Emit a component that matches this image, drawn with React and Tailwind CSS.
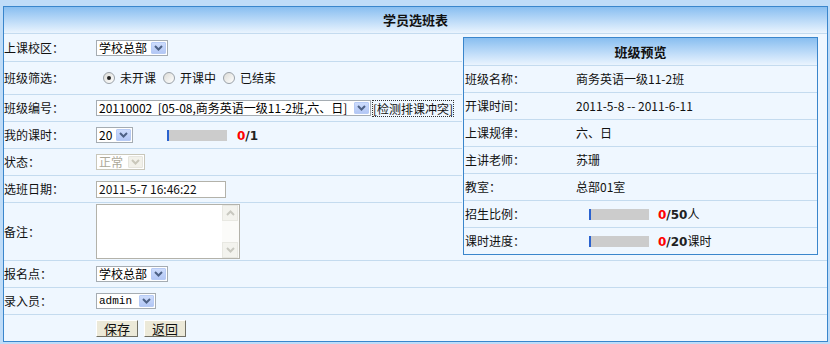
const LINE = 'border-[#c4dbef]';

function Chevron({ color = '#4d6185' }) {
  return (
    <svg width="9" height="6" viewBox="0 0 9 6">
      <path d="M1 1 L4.5 4.5 L8 1" fill="none" stroke={color} strokeWidth="2" />
    </svg>
  );
}

function Select({ text, className, disabled, mono }) {
  return (
    <div
      className={`flex h-[16px] items-stretch border bg-white ${
        disabled ? 'border-[#c9c7ba] text-[#aca899]' : 'border-[#a5acb2] text-black'
      } ${className}`}
    >
      <span
        className={`flex flex-1 items-center whitespace-pre pl-[2px] leading-[14px] ${
          mono ? "font-['Liberation_Mono',monospace] text-[11px]" : ''
        }`}
      >
        {text}
      </span>
      <span
        className={`m-[1px] flex w-[15px] shrink-0 items-center justify-center rounded-[1px] border ${
          disabled
            ? 'border-[#e6e5de] bg-[#f2f1ea]'
            : 'border-[#b7cbf5] bg-gradient-to-b from-[#cddcfc] to-[#b3c7f5]'
        }`}
      >
        <Chevron color={disabled ? '#c9c7ba' : '#4d6185'} />
      </span>
    </div>
  );
}

function Radio({ checked, label }) {
  return (
    <label className="flex items-center">
      <span className="flex h-[12px] w-[12px] items-center justify-center rounded-full border border-[#9aa1a8] bg-gradient-to-br from-[#dcdcd7] to-white">
        {checked && <span className="h-[4px] w-[4px] rounded-full bg-[#222]" />}
      </span>
      <span className="ml-[5px]">{label}</span>
    </label>
  );
}

function Bar() {
  return (
    <span className="flex h-[11px] w-[60px] bg-[#cccccc]">
      <span className="h-full w-[2px] bg-[#2a62cf]" />
    </span>
  );
}

function Ratio({ total }) {
  return (
    <span className="font-['DejaVu_Sans',sans-serif] text-[12px] font-bold">
      <span className="text-[#ff0000]">0</span>
      <span className="text-[#222]">/{total}</span>
    </span>
  );
}

function Row({ label, h, last, children }) {
  return (
    <div className={`flex items-center ${h} ${last ? '' : `border-b ${LINE}`}`}>
      <div className="w-[92px] shrink-0">{label}</div>
      <div className="flex flex-1 items-center">{children}</div>
    </div>
  );
}

function PreviewRow({ label, last, children }) {
  return (
    <div className={`flex items-center ${last ? 'h-[26px]' : `h-[27px] border-b ${LINE}`}`}>
      <div className="w-[112px] shrink-0 pl-[1px]">{label}</div>
      <div className="flex flex-1 items-center">{children}</div>
    </div>
  );
}

function ArrowBtn({ up }) {
  return (
    <span className="flex h-[16px] w-[16px] items-center justify-center border border-[#e8e8e2] bg-[#f3f3ee]">
      <svg width="9" height="6" viewBox="0 0 9 6">
        <path
          d={up ? 'M1 5 L4.5 1.5 L8 5' : 'M1 1 L4.5 4.5 L8 1'}
          fill="none"
          stroke="#c8c8c0"
          strokeWidth="2"
        />
      </svg>
    </span>
  );
}

export default function App() {
  return (
    <div className="h-[344px] w-[830px] overflow-hidden bg-[#bfdcf8] pl-[3px] pt-[6px] font-['Noto_Sans_CJK_SC',sans-serif] text-[12px] text-[#111]">
      <div className="w-[825px] border border-[#3a86cc] bg-[#eff7ff]">
        <div className={`flex h-[27px] items-center justify-center border-b ${LINE} bg-gradient-to-b from-[#88bef0] to-[#eaf4fe] text-[13px] font-bold`}>
          学员选班表
        </div>

        <div className={`flex border-b ${LINE}`}>
          {/* left form */}
          <div className="w-[458px] shrink-0">
            <Row label="上课校区：" h="h-[28px]">
              <Select text="学校总部" className="w-[72px]" />
            </Row>
            <Row label="班级筛选：" h="h-[33px]">
              <div className="ml-[7px] flex items-center gap-[7px]">
                <Radio checked label="未开课" />
                <Radio label="开课中" />
                <Radio label="已结束" />
              </div>
            </Row>
            <Row label="班级编号：" h="h-[27px]">
              <Select text="20110002  [05-08,商务英语一级11-2班,六、日]" className="w-[275px]" />
              <span className="ml-[1px] border border-dotted border-[#333] leading-[15px]">[检测排课冲突]</span>
            </Row>
            <Row label="我的课时：" h="h-[27px]">
              <Select text="20" className="w-[37px]" />
              <span className="ml-[34px]">
                <Bar />
              </span>
              <span className="ml-[10px]">
                <Ratio total="1" />
              </span>
            </Row>
            <Row label="状态：" h="h-[27px]">
              <Select text="正常" disabled className="w-[49px]" />
            </Row>
            <Row label="选班日期：" h="h-[27px]">
              <div className="flex h-[17px] w-[130px] items-center border border-[#b3b2aa] bg-white pl-[2px] leading-[14px]">
                2011-5-7 16:46:22
              </div>
            </Row>
            <Row label="备注：" h="h-[57px]" last>
              <div className="flex h-[55px] w-[144px] justify-end border border-[#b3b2aa] bg-white">
                <div className="flex w-[17px] flex-col justify-between bg-[#fbfbf9]">
                  <ArrowBtn up />
                  <ArrowBtn />
                </div>
              </div>
            </Row>
          </div>

          {/* right preview */}
          <div className="flex-1">
            <div className="ml-[1px] mt-[3px] w-[355px] border border-[#3a86cc]">
              <div className={`flex h-[28px] items-center justify-center border-b ${LINE} bg-gradient-to-b from-[#88bef0] to-[#eaf4fe] text-[13px] font-bold`}>
                班级预览
              </div>
              <PreviewRow label="班级名称：">商务英语一级11-2班</PreviewRow>
              <PreviewRow label="开课时间：">2011-5-8 -- 2011-6-11</PreviewRow>
              <PreviewRow label="上课规律：">六、日</PreviewRow>
              <PreviewRow label="主讲老师：">苏珊</PreviewRow>
              <PreviewRow label="教室：">总部01室</PreviewRow>
              <PreviewRow label="招生比例：">
                <span className="ml-[13px]">
                  <Bar />
                </span>
                <span className="ml-[9px]">
                  <Ratio total="50" />
                  人
                </span>
              </PreviewRow>
              <PreviewRow label="课时进度：" last>
                <span className="ml-[13px]">
                  <Bar />
                </span>
                <span className="ml-[9px]">
                  <Ratio total="20" />
                  课时
                </span>
              </PreviewRow>
            </div>
          </div>
        </div>

        <Row label="报名点：" h="h-[27px]">
          <Select text="学校总部" className="w-[72px]" />
        </Row>
        <Row label="录入员：" h="h-[27px]">
          <Select text="admin" mono className="w-[60px]" />
        </Row>
        <Row label="" h="h-[26px]" last>
          <div className="flex gap-[6px]">
            <button className="flex h-[17px] w-[42px] items-center justify-center border border-b-[#716f64] border-l-white border-r-[#716f64] border-t-white bg-[#ece9d8] text-[13px] leading-none">
              保存
            </button>
            <button className="flex h-[17px] w-[42px] items-center justify-center border border-b-[#716f64] border-l-white border-r-[#716f64] border-t-white bg-[#ece9d8] text-[13px] leading-none">
              返回
            </button>
          </div>
        </Row>
      </div>
    </div>
  );
}
